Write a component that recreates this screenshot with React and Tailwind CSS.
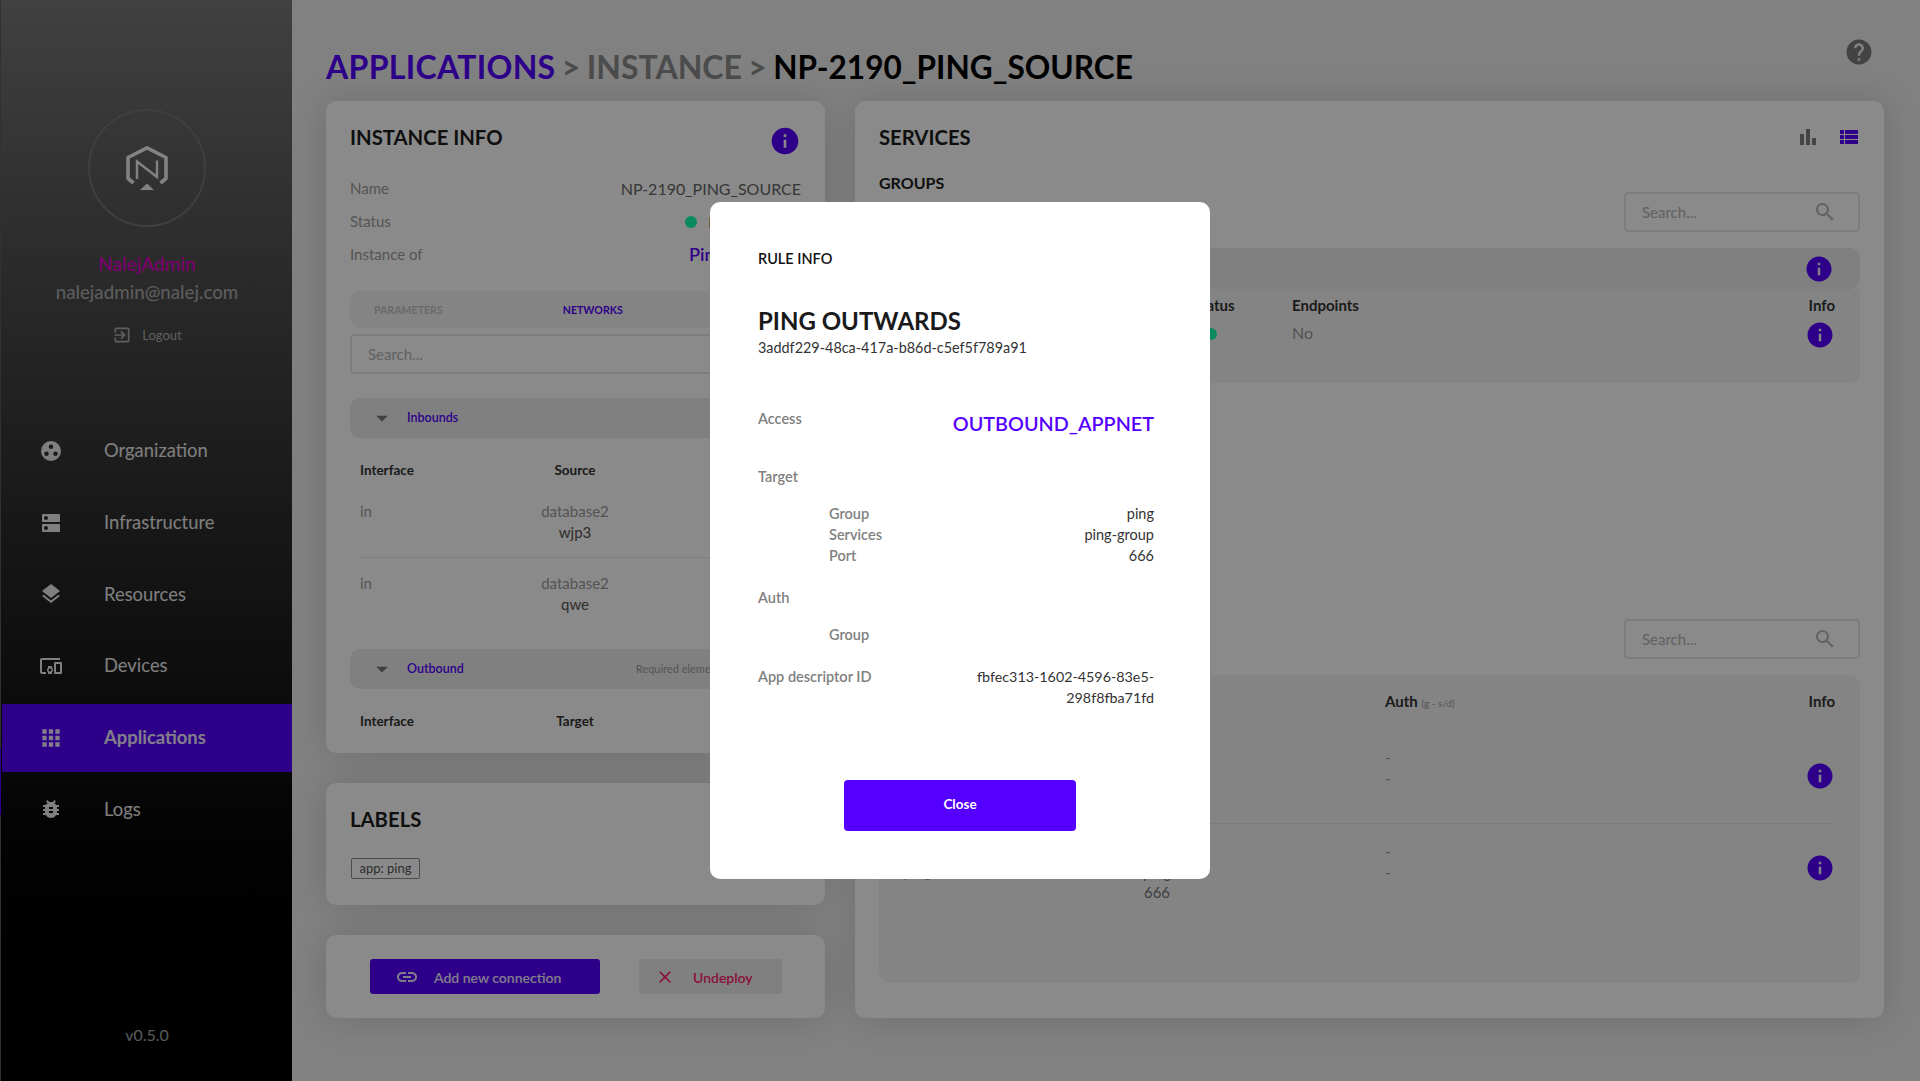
import React from "react";
import {
  MdInfo, MdHelp, MdBarChart, MdViewList, MdSearch, MdLink, MdClose, MdArrowDropDown,
  MdApps, MdDns, MdLayers, MdDevicesOther, MdBugReport, MdExitToApp,
} from "react-icons/md";

const NalejLogo = () => (
  <svg width="42" height="44" viewBox="0 0 42 44" fill="none" stroke="#f0f0f0">
    <path d="M7.500 37 L2 32.500 V11.500 L21 1.800 L40 11.500 V32.500 L34.500 37" strokeWidth="3.600" strokeLinejoin="round" />
    <path d="M11 33 V15.500 L31 31 V14.500" strokeWidth="2.400" />
    <path d="M21 37.500 L28 44 H14 Z" fill="#f0f0f0" stroke="none" />
  </svg>
);

const OrgIcon = () => (
  <svg width="20" height="20" viewBox="0 0 20 20" fill="#ebebeb">
    <path
      fillRule="evenodd"
      d="M10 0a10 10 0 1 0 0 20a10 10 0 0 0 0-20zM10 3.500a2.300 2.300 0 1 1 0 4.600a2.300 2.300 0 0 1 0-4.600zM5.500 10.500a2.300 2.300 0 1 1 0 4.600a2.300 2.300 0 0 1 0-4.600zM14.500 10.500a2.300 2.300 0 1 1 0 4.600a2.300 2.300 0 0 1 0-4.600z"
    />
  </svg>
);

const menu = [
  { label: "Organization", icon: <OrgIcon /> },
  { label: "Infrastructure", icon: <MdDns size={24} /> },
  { label: "Resources", icon: <MdLayers size={24} /> },
  { label: "Devices", icon: <MdDevicesOther size={24} /> },
  { label: "Applications", icon: <MdApps size={26} />, active: true },
  { label: "Logs", icon: <MdBugReport size={24} /> },
];

const Sidebar = () => (
  <aside className="relative w-[292px] h-full shrink-0 flex flex-col items-center pl-[1px] bg-gradient-to-b from-[#787878] to-[#000000] border-l border-[#5c5c5c]">
    <div className="mt-[109px] w-[118px] h-[118px] rounded-full border-2 border-[#757575] flex items-center justify-center">
      <NalejLogo />
    </div>
    <div className="mt-[25px] text-[19px] leading-[24px] font-medium text-[#e400cc]">NalejAdmin</div>
    <div className="mt-[4px] text-[18.700px] leading-[24px] font-medium text-[#ababab]">nalejadmin@nalej.com</div>
    <div className="mt-[21px] flex items-center gap-[10px] text-[13px] leading-[20px] text-[#b0b0b0]">
      <MdExitToApp size={20} />
      Logout
    </div>
    <nav className="mt-[72px] w-full flex flex-col">
      {menu.map((m) => (
        <div
          key={m.label}
          className={
            "flex items-center w-full h-[68px] mb-[3.700px] pl-[36px] text-[18.400px] " +
            (m.active ? "bg-[#5500ff] font-bold text-[#f0e8ff]" : "text-[#ebebeb]")
          }
        >
          <span className="w-[26px] flex justify-center">{m.icon}</span>
          <span className="ml-[40px]">{m.label}</span>
        </div>
      ))}
    </nav>
    <div className="mt-auto mb-[35px] text-[16px] leading-[22px] text-[#a8a8a8]">v0.5.0</div>
    <div className="absolute left-[-1px] top-[748px] w-[1px] h-[67px] bg-[#5500ff]" />
  </aside>
);

const Card = ({ className, children }) => (
  <section className={"bg-white rounded-[10px] shadow-[0_0_36px_rgba(0,0,0,0.14)] overflow-hidden px-[24px] " + className}>
    {children}
  </section>
);

const CardHeader = ({ title, children }) => (
  <div className="flex items-center justify-between h-[40px]">
    <h2 className="text-[20.300px] font-bold text-[#1c1c1c]">{title}</h2>
    {children}
  </div>
);

const SearchBox = ({ className }) => (
  <div className={"h-[40px] rounded-[4px] border-2 border-[#e8e8e8] flex items-center justify-between pl-[16px] pr-[21px] text-[15px] text-[#b4b4b4] " + className}>
    Search...
    <MdSearch size={24} className="text-[#b4b4b4]" />
  </div>
);

const InfoRow = ({ label, children }) => (
  <div className="flex items-center justify-between h-[33px] text-[15px] text-[#9c9c9c]">
    <span>{label}</span>
    {children}
  </div>
);

const Accordion = ({ title, h, children }) => (
  <div className={"flex items-center rounded-[10px] bg-[#ececec] pl-[18px] " + h}>
    <MdArrowDropDown size={28} className="text-[#777777]" />
    <span className="ml-[11px] pt-[1px] text-[12.500px] font-semibold text-[#5500ff]">{title}</span>
    {children}
  </div>
);

const ConnRow = ({ a, b, border }) => (
  <div className={"grid grid-cols-[155px_120px] text-[15px] leading-[21px] " + (border ? "pb-[14px] border-b border-[#e6e6e6]" : "pt-[15px]")}>
    <span className="text-[#9c9c9c]">in</span>
    <div className="text-center">
      <div className="text-[#9c9c9c]">{a}</div>
      <div className="text-[#555555]">{b}</div>
    </div>
  </div>
);

const ConnHeader = ({ second }) => (
  <div className="grid grid-cols-[155px_120px] h-[20px] px-[10px] text-[13.500px] leading-[20px] font-bold text-[#333333]">
    <span>Interface</span>
    <span className="text-center">{second}</span>
  </div>
);

const InstanceInfo = () => (
  <Card className="h-[652px] pt-[16px]">
    <CardHeader title="INSTANCE INFO">
      <MdInfo size={32} className="text-[#5500ff] mt-[8px]" />
    </CardHeader>
    <div className="mt-[15px]">
      <InfoRow label="Name">
        <span className="text-[16px] text-[#666666]">NP-2190_PING_SOURCE</span>
      </InfoRow>
      <InfoRow label="Status">
        <span className="flex items-center gap-[11px]">
          <span className="w-[12px] h-[12px] rounded-full bg-[#12ffb0]" />
          <span className="w-[93px] text-[16px] text-[#666666]">RUNNING</span>
        </span>
      </InfoRow>
      <InfoRow label="Instance of">
        <span className="w-[112px] text-[18px] font-semibold text-[#5500ff]">Ping</span>
      </InfoRow>
    </div>
    <div className="mt-[20px] flex items-center h-[37px] rounded-[10px] bg-[#f4f4f4] pl-[24px] pt-[2px] text-[10.600px] font-bold">
      <span className="text-[#c4c4c4]">PARAMETERS</span>
      <span className="ml-[120px] text-[#5500ff]">NETWORKS</span>
    </div>
    <SearchBox className="mt-[6px] !h-[40px] w-full" />
    <Accordion title="Inbounds" h="mt-[24px] h-[40px]" />
    <div className="mt-[22px]">
      <ConnHeader second="Source" />
    </div>
    <div className="mt-[21px] px-[10px]">
      <ConnRow a="database2" b="wjp3" border />
      <ConnRow a="database2" b="qwe" />
    </div>
    <Accordion title="Outbound" h="mt-[34px] h-[40px]">
      <span className="ml-[172px] text-[11px] text-[#9c9c9c]">Required elements</span>
    </Accordion>
    <div className="mt-[22px]">
      <ConnHeader second="Target" />
    </div>
  </Card>
);

const Labels = () => (
  <Card className="h-[122px] mt-[30px] pt-[16px]">
    <CardHeader title="LABELS" />
    <span className="mt-[19px] ml-[1px] inline-block h-[21px] w-[69px] rounded-[2px] border border-[#8c8c8c] text-center text-[13px] leading-[19px] text-[#555555]">
      app: ping
    </span>
  </Card>
);

const Actions = () => (
  <Card className="h-[83px] mt-[30px] flex items-center pl-[44px]">
    <button className="flex items-center w-[230px] h-[35px] rounded-[3px] bg-[#5500ff] pl-[25px] text-[14px] font-semibold text-[#f0e8ff]">
      <MdLink size={24} />
      <span className="ml-[15px] pt-[1px]">Add new connection</span>
    </button>
    <button className="flex items-center w-[143px] h-[35px] ml-[39px] rounded-[3px] bg-[#ececec] pl-[16px] text-[14px] font-semibold text-[#ff2070]">
      <MdClose size={20} />
      <span className="ml-[18px] pt-[1px]">Undeploy</span>
    </button>
  </Card>
);

const colsClass = "grid grid-cols-[201px_154px_151px_1fr_auto]";

const Services = () => (
  <Card className="h-[917px] pt-[16px]">
    <CardHeader title="SERVICES">
      <div className="flex items-center gap-[17px] text-[#5500ff] mr-[-1px]">
        <MdBarChart size={24} className="text-[#7e7e7e]" />
        <MdViewList size={24} />
      </div>
    </CardHeader>
    <div className="mt-[16px] h-[19px] text-[16px] leading-[19px] font-bold text-[#1c1c1c]">GROUPS</div>
    <div className="flex justify-end">
      <SearchBox className="w-[236px]" />
    </div>
    <div className="mt-[16px] h-[41px] rounded-[10px] bg-[#ececec] flex items-center justify-end pr-[26px]">
      <MdInfo size={30} className="text-[#5500ff]" />
    </div>
    <div className="h-[94px] rounded-b-[10px] bg-[#f4f4f4] grid grid-cols-[314px_99px_1fr_auto] pr-[25px] pt-[6px] grid-rows-[21px_1fr]">
      <span />
      <span className="text-[15px] font-bold leading-[21px] text-[#333333]">Status</span>
      <span className="text-[15px] font-bold leading-[21px] text-[#333333]">Endpoints</span>
      <span className="justify-self-end text-[15px] font-bold leading-[21px] text-[#333333]">Info</span>
      <span />
      <span className="mt-[12px] ml-[12px] w-[12px] h-[12px] rounded-full bg-[#12ffb0]" />
      <span className="mt-[6px] text-[16px] leading-[22px] text-[#9c9c9c]">No</span>
      <MdInfo size={30} className="mt-[4px] text-[#5500ff]" />
    </div>
    <div className="mt-[236px] flex justify-end">
      <SearchBox className="w-[236px]" />
    </div>
    <div className="mt-[16px] h-[308px] rounded-[10px] bg-[#f4f4f4] pr-[25px] text-[15px] text-[#9c9c9c]">
      <div className={colsClass + " pt-[16px] h-[54px]"}>
        <span />
        <span className="text-center whitespace-nowrap text-[15px] font-bold leading-[20px] text-[#333333]">
          Target <span className="text-[10px] font-normal text-[#9c9c9c]">(g - s/p)</span>
        </span>
        <span />
        <span className="text-[15px] font-bold leading-[20px] text-[#333333]">
          Auth <span className="text-[10px] font-normal text-[#9c9c9c]">(g - s/d)</span>
        </span>
        <span className="justify-self-end text-[15px] font-bold leading-[20px] text-[#333333]">Info</span>
      </div>
      <div className={colsClass + " h-[95px] border-b border-[#e6e6e6] leading-[20.500px]"}>
        <span />
        <div className="pt-[18px] text-center text-[#777777]">
          <div>ping_group_0</div>
          <div>ping</div>
          <div>666</div>
        </div>
        <span />
        <div className="pt-[18px]">
          <div>-</div>
          <div>-</div>
        </div>
        <MdInfo size={30} className="mt-[32px] text-[#5500ff]" />
      </div>
      <div className={colsClass + " leading-[20.500px]"}>
        <span className="pt-[37px] pl-[24px]">ping</span>
        <div className="pt-[17px] text-center text-[#777777]">
          <div>ping_group_0</div>
          <div>ping</div>
          <div>666</div>
        </div>
        <span />
        <div className="pt-[17px]">
          <div>-</div>
          <div>-</div>
        </div>
        <MdInfo size={30} className="mt-[29px] text-[#5500ff]" />
      </div>
    </div>
  </Card>
);

const DetailRow = ({ label, value }) => (
  <div className="flex justify-between h-[21px] leading-[21px]">
    <span className="text-[14.500px] font-semibold text-[#808080]">{label}</span>
    <span className="text-[14.500px] text-[#333333]">{value}</span>
  </div>
);

const RuleDialog = () => (
  <div className="absolute inset-0 bg-black/[0.46] flex items-center justify-center">
    <div className="w-[500px] h-[677px] rounded-[10px] bg-white pl-[48px] pr-[56px] pt-[47px]">
      <div className="text-[14.500px] leading-[20px] font-semibold text-[#111111]">RULE INFO</div>
      <div className="mt-[35px] text-[24px] leading-[34px] font-bold text-[#1a1a1a]">PING OUTWARDS</div>
      <div className="text-[14.400px] leading-[20px] text-[#333333]">3addf229-48ca-417a-b86d-c5ef5f789a91</div>
      <div className="mt-[50px] flex justify-between">
        <span className="text-[14.500px] leading-[21px] font-semibold text-[#808080]">Access</span>
        <span className="text-[19.800px] leading-[30px] font-semibold text-[#5500ff]">OUTBOUND_APPNET</span>
      </div>
      <div className="mt-[28px] h-[21px] text-[14.500px] leading-[21px] font-semibold text-[#808080]">Target</div>
      <div className="mt-[16px] pl-[71px]">
        <DetailRow label="Group" value="ping" />
        <DetailRow label="Services" value="ping-group" />
        <DetailRow label="Port" value="666" />
      </div>
      <div className="mt-[21px] h-[21px] text-[14.500px] leading-[21px] font-semibold text-[#808080]">Auth</div>
      <div className="mt-[16px] pl-[71px]">
        <DetailRow label="Group" value="" />
      </div>
      <div className="mt-[21px] flex justify-between leading-[21px]">
        <span className="text-[14.500px] font-semibold text-[#808080]">App descriptor ID</span>
        <span className="w-[190px] text-right text-[14.300px] text-[#333333]">fbfec313-1602-4596-83e5-298f8fba71fd</span>
      </div>
      <div className="mt-[72px] ml-[86px] w-[232px]">
        <button className="w-[232px] h-[51px] pb-[2px] rounded-[4px] bg-[#5500ff] text-[13.500px] font-bold text-white">Close</button>
      </div>
    </div>
  </div>
);

export default function App() {
  return (
    <div className="relative flex w-full h-[1081px] overflow-hidden bg-[#eeeeee] font-[Lato,sans-serif]">
      <Sidebar />
      <main className="flex-1 pl-[34px] pr-[36px]">
        <div className="flex justify-between h-[101px]">
          <h1 className="pt-[46px] text-[32px] leading-[42px] font-bold text-[#8c8c8c] [word-spacing:-1.4px]">
            <span className="text-[#5500ff] tracking-[0.3px]">APPLICATIONS</span> &gt; INSTANCE &gt; <span className="text-black text-[31.600px]">NP-2190_PING_SOURCE</span>
          </h1>
          <MdHelp size={30} className="mt-[37px] mr-[10px] text-[#7c7c7c]" />
        </div>
        <div className="flex gap-[30px]">
          <div className="w-[499px] shrink-0">
            <InstanceInfo />
            <Labels />
            <Actions />
          </div>
          <div className="flex-1">
            <Services />
          </div>
        </div>
      </main>
      <RuleDialog />
    </div>
  );
}
